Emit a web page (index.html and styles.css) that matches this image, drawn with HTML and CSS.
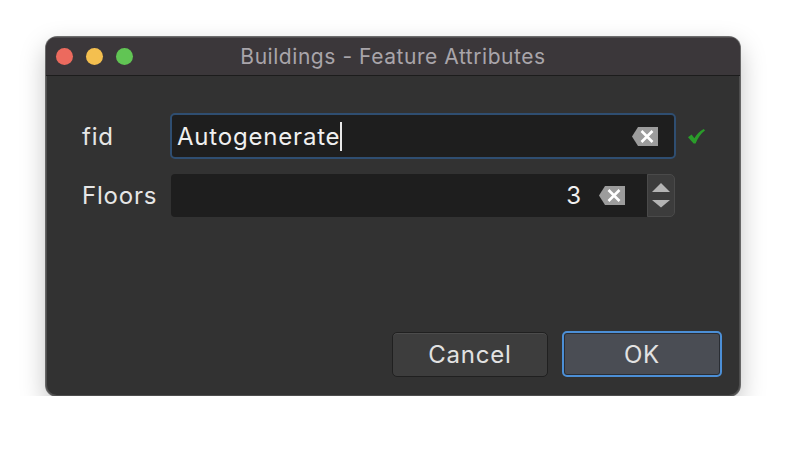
FILE: index.html
```html
<!DOCTYPE html>
<html>
<head>
<meta charset="utf-8">
<link rel="stylesheet" href="styles.css">
</head>
<body>
<div class="window">
  <div class="titlebar">
    <div class="lights">
      <span class="light red"></span>
      <span class="light yellow"></span>
      <span class="light green"></span>
    </div>
    <div class="title">Buildings - Feature Attributes</div>
  </div>
  <div class="content">
    <div class="form">
      <div class="label">fid</div>
      <div class="field focus">
        <span class="text">Autogenerate</span><span class="caret"></span>
        <svg class="clear" width="26" height="19" viewBox="0 0 26 19"><polygon points="0,9.5 6,0 26,0 26,19 6,19" fill="#9c9c9c"/><path d="M9.5 4 L20.5 15 M20.5 4 L9.5 15" stroke="#fff" stroke-width="2.6" stroke-linecap="butt"/></svg>
      </div>
      <div class="status">
        <svg width="17" height="15" viewBox="0 0 17 15"><path d="M0 8.2 L3.6 5.6 L6.4 9.2 C8.6 5.4 11.6 2.2 15.8 0 L17 1.4 C12.8 4.6 9.6 9 7.6 14.4 L5.6 14.4 Z" fill="#2a9c2a"/></svg>
      </div>

      <div class="label">Floors</div>
      <div class="numfield">
        <div class="numinput">
          <span class="val">3</span>
          <svg class="clear" width="26" height="19" viewBox="0 0 26 19"><polygon points="0,9.5 6,0 26,0 26,19 6,19" fill="#9c9c9c"/><path d="M9.5 4 L20.5 15 M20.5 4 L9.5 15" stroke="#fff" stroke-width="2.6" stroke-linecap="butt"/></svg>
        </div>
        <div class="spinner">
          <svg width="18" height="26" viewBox="0 0 18 26"><polygon points="0,9 9,0 18,9" fill="#b4b4b4"/><polygon points="0,17 18,17 9,24.5" fill="#b4b4b4"/></svg>
        </div>
      </div>
      <div></div>
    </div>
    <div class="buttons">
      <button class="btn">Cancel</button>
      <button class="btn default">OK</button>
    </div>
  </div>
</div>
</body>
</html>
```
FILE: styles.css
```css
html, body {
  margin: 0;
  padding: 0;
  background: #ffffff;
}
body {
  padding: 37px 0 0 46px;
  font-family: "Inter", "Liberation Sans", sans-serif;
}
.window {
  width: 694px;
  height: 359px;
  box-sizing: border-box;
  border-radius: 11px;
  background: #323232;
  overflow: hidden;
  display: flex;
  flex-direction: column;
  box-shadow: 0 0 0 1px rgba(0,0,0,0.55), 0 10px 26px rgba(0,0,0,0.25), inset 0 0 0 1px rgba(255,255,255,0.14);
}
.titlebar {
  height: 39px;
  box-sizing: border-box;
  background: #3b373a;
  border-bottom: 1px solid #1c1c1c;
  box-shadow: inset 0 1px 0 rgba(255,255,255,0.12);
  display: flex;
  align-items: center;
  position: relative;
}
.lights {
  display: flex;
  gap: 13px;
  padding-left: 10px;
}
.light {
  width: 17px;
  height: 17px;
  border-radius: 50%;
  display: block;
}
.red { background: #ec6a5e; }
.yellow { background: #f4bf4f; }
.green { background: #61c554; }
.title {
  position: absolute;
  left: 0;
  right: 0;
  text-align: center;
  color: #a9a5aa;
  font-size: 21px;
  letter-spacing: 0.55px;
  pointer-events: none;
}
.content {
  flex: 1;
  display: flex;
  flex-direction: column;
  padding: 37px 18px 19px 36px;
}
.form {
  display: grid;
  grid-template-columns: 88px 506px 1fr;
  row-gap: 15px;
  align-items: center;
}
.label {
  color: #e6e6e6;
  font-size: 24px;
  letter-spacing: 0.8px;
}
.field {
  height: 46px;
  box-sizing: border-box;
  background: #1e1e1e;
  border: 2px solid #2f4e71;
  border-radius: 5px;
  display: flex;
  align-items: center;
  padding: 0 16px 0 5px;
  color: #f0f0f0;
  font-size: 24px;
  letter-spacing: 0.8px;
}
.caret {
  display: inline-block;
  width: 2px;
  height: 29px;
  background: #e8e8e8;
  margin-left: 0;
}
.field .clear {
  margin-left: auto;
}
.status {
  padding-left: 12px;
  display: flex;
  align-items: center;
}
.numfield {
  height: 43px;
  display: flex;
  margin-left: 1px;
  margin-right: 1px;
}
.numinput {
  flex: 1;
  background: #1e1e1e;
  border-radius: 4px 0 0 4px;
  display: flex;
  align-items: center;
  justify-content: flex-end;
  gap: 18px;
  padding-right: 22px;
  color: #f0f0f0;
  font-size: 24px;
}
.spinner {
  width: 28px;
  box-sizing: border-box;
  background: #3c3c3c;
  border: 1px solid #4a4a4a;
  border-radius: 0 5px 5px 0;
  display: flex;
  align-items: center;
  justify-content: center;
}
.buttons {
  margin-top: auto;
  display: flex;
  justify-content: flex-end;
  align-items: center;
  gap: 14px;
}
.btn {
  font-family: inherit;
  font-size: 24px;
  letter-spacing: 0.8px;
  color: #e2e2e2;
  height: 45px;
  width: 156px;
  box-sizing: border-box;
  background: #3d3d3d;
  border: 1px solid #202020;
  border-radius: 5px;
  box-shadow: inset 0 1px 0 rgba(255,255,255,0.08);
  padding: 0;
}
.btn.default {
  width: 160px;
  height: 46px;
  background: #4a4d54;
  border: 2px solid #4c8fd6;
  box-shadow: inset 0 0 0 1px #2a2d33;
}
```
